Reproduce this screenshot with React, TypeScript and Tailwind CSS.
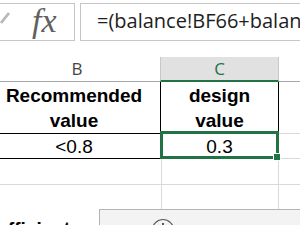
const cell = "font-['Liberation_Sans',Arial,sans-serif] text-[19px] leading-[25px] text-black";

export default function App() {
  return (
    <div className="w-[300px] h-[250px] bg-white overflow-hidden">
      <div className="relative h-[225px] overflow-hidden">
        {/* formula bar */}
        <div className="flex pt-[3px]">
          <div className="-ml-[10px] w-[85px] h-[38px] border border-[#c6c6c6] flex items-center">
            <svg width="12" height="38" viewBox="0 0 12 38" className="ml-[8px] shrink-0">
              <path d="M10 10 L2 20" stroke="#b8b8b8" strokeWidth="2.8" fill="none" />
            </svg>
            <span className="ml-[21px] font-['Liberation_Serif',serif] italic text-[34px] leading-none text-[#606060] -mt-[3px]">
              fx
            </span>
          </div>
          <div className="ml-[5px] flex-1 h-[38px] border border-r-0 border-[#c6c6c6] flex items-center pl-[16px] overflow-hidden whitespace-nowrap">
            <span className="font-['Open_Sans',sans-serif] text-[20px] text-[#1e1e1e] -mt-[2px]">
              =(balance!BF66+balance!BF67)
            </span>
          </div>
        </div>

        {/* column headers */}
        <div className="flex -ml-[12px] mt-[16px] h-[25px] font-['Open_Sans',sans-serif] text-[17px]">
          <div className="w-[172px] border-b border-[#a6a6a6] flex items-center justify-center text-[#444] pl-[6px]">
            B
          </div>
          <div className="w-[119px] bg-[#e1e1e1] border-x border-[#c8c8c8] border-b-2 border-b-[#217346] flex items-center justify-center text-[#217346]">
            C
          </div>
          <div className="flex-1 border-b border-[#a6a6a6]" />
        </div>

        {/* row 1 */}
        <div className="flex -ml-[12px] h-[52px]">
          <div className={`w-[172px] border-b border-black flex items-center justify-center text-center font-bold ${cell}`}>
            Recommended<br />value
          </div>
          <div className={`w-[119px] border-x border-b border-black flex items-center justify-center text-center font-bold ${cell}`}>
            design<br />value
          </div>
          <div className="flex-1 border-b border-[#d9d9d9]" />
        </div>

        {/* row 2 */}
        <div className="flex -ml-[12px] h-[25px]">
          <div className={`w-[172px] border-b border-black flex items-center justify-center ${cell}`}>
            &lt;0.8
          </div>
          <div className={`relative w-[119px] border-x border-b border-black flex items-center justify-center ${cell}`}>
            0.3
            <div className="absolute -left-[1px] -top-[3px] -right-[1px] -bottom-[1px] border-[3px] border-[#217346]" />
            <div className="absolute -right-[3px] -bottom-[3px] w-[8px] h-[8px] border border-white bg-[#217346]" />
          </div>
          <div className="flex-1 border-b border-[#d9d9d9]" />
        </div>

        {/* row 3 */}
        <div className="flex -ml-[12px] h-[26px] border-b border-[#d9d9d9]">
          <div className="w-[173px]" />
          <div className="w-[118px] border-x border-[#d9d9d9]" />
        </div>

        {/* row 4 */}
        <div className="flex -ml-[12px] h-[60px]">
          <div className={`w-[173px] pt-[31px] font-bold whitespace-nowrap ${cell}`}>
            <span className="-ml-[16px]">Coefficient :</span>
          </div>
          <div className="w-[118px] border-x border-[#d9d9d9]" />
        </div>

        {/* popup panel */}
        <div className="absolute left-[99px] top-[209px] -right-[2px] h-[60px] bg-[#f3f3f3] border border-[#b4b4b4]">
          <svg width="24" height="24" viewBox="0 0 24 24" className="ml-[51px] mt-[8px]">
            <circle cx="12" cy="12" r="10.5" stroke="#5a5a5a" strokeWidth="1.2" fill="none" />
            <path d="M12 5 L12 8" stroke="#333" strokeWidth="1.6" />
          </svg>
        </div>
      </div>
    </div>
  );
}
